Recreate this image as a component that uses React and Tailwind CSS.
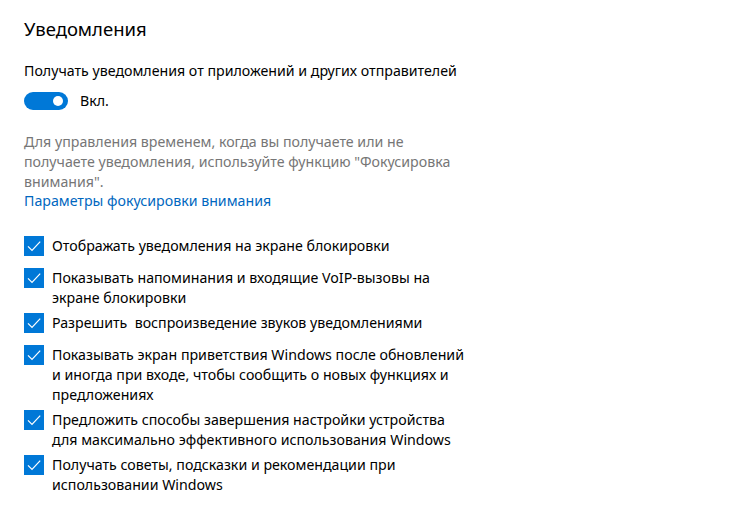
const items = [
  ["Отображать уведомления на экране блокировки"],
  ["Показывать напоминания и входящие VoIP-вызовы на", "экране блокировки"],
  ["Разрешить  воспроизведение звуков уведомлениями"],
  [
    "Показывать экран приветствия Windows после обновлений",
    "и иногда при входе, чтобы сообщить о новых функциях и",
    "предложениях",
  ],
  [
    "Предложить способы завершения настройки устройства",
    "для максимально эффективного использования Windows",
  ],
  ["Получать советы, подсказки и рекомендации при", "использовании Windows"],
];

function CheckBox() {
  return (
    <div className="w-5 h-5 shrink-0 bg-[#0078d7] flex items-center justify-center">
      <svg width="16" height="16" viewBox="0 0 16 16" fill="none">
        <path d="M2 8.4 L6 12.4 L14.2 3.6" stroke="white" strokeWidth="1.2" />
      </svg>
    </div>
  );
}

export default function App() {
  return (
    <div
      className="w-[740px] h-[508px] bg-white text-black overflow-hidden pl-6"
      style={{ fontFamily: '"Noto Sans", "Open Sans", sans-serif' }}
    >
      {/* Header */}
      <div className="pt-[15px] text-[18.5px] leading-[28px] h-[43px]">Уведомления</div>

      <div className="mt-[18px] text-[14.2px] leading-[20px] whitespace-nowrap">
        Получать уведомления от приложений и других отправителей
      </div>

      {/* Toggle */}
      <div className="mt-[10px] flex items-center h-[20px]">
        <div className="w-[44px] h-[18px] rounded-full bg-[#0078d7] flex items-center justify-end pr-[5px]">
          <div className="w-[10px] h-[10px] rounded-full bg-white" />
        </div>
        <span className="ml-3 text-[14.2px] leading-[20px]">Вкл.</span>
      </div>

      {/* Focus assist note */}
      <div className="mt-[21px] text-[14.2px] leading-[20px] text-[#767676] whitespace-nowrap">
        <div>Для управления временем, когда вы получаете или не</div>
        <div>получаете уведомления, используйте функцию "Фокусировка</div>
        <div>внимания".</div>
      </div>
      <div className="text-[14.2px] leading-[20px] text-[#0067c0] whitespace-nowrap -mt-[1px]">
        Параметры фокусировки внимания
      </div>

      {/* Checkboxes */}
      <div className="mt-[25px] flex flex-col">
        {items.map((lines, i) => (
          <div key={i} className="flex min-h-[32px] pb-[5px]">
            <CheckBox />
            <div className="ml-2 text-[14.2px] leading-[20px] whitespace-pre">
              {lines.map((l, j) => (
                <div key={j}>{l}</div>
              ))}
            </div>
          </div>
        ))}
      </div>
    </div>
  );
}
